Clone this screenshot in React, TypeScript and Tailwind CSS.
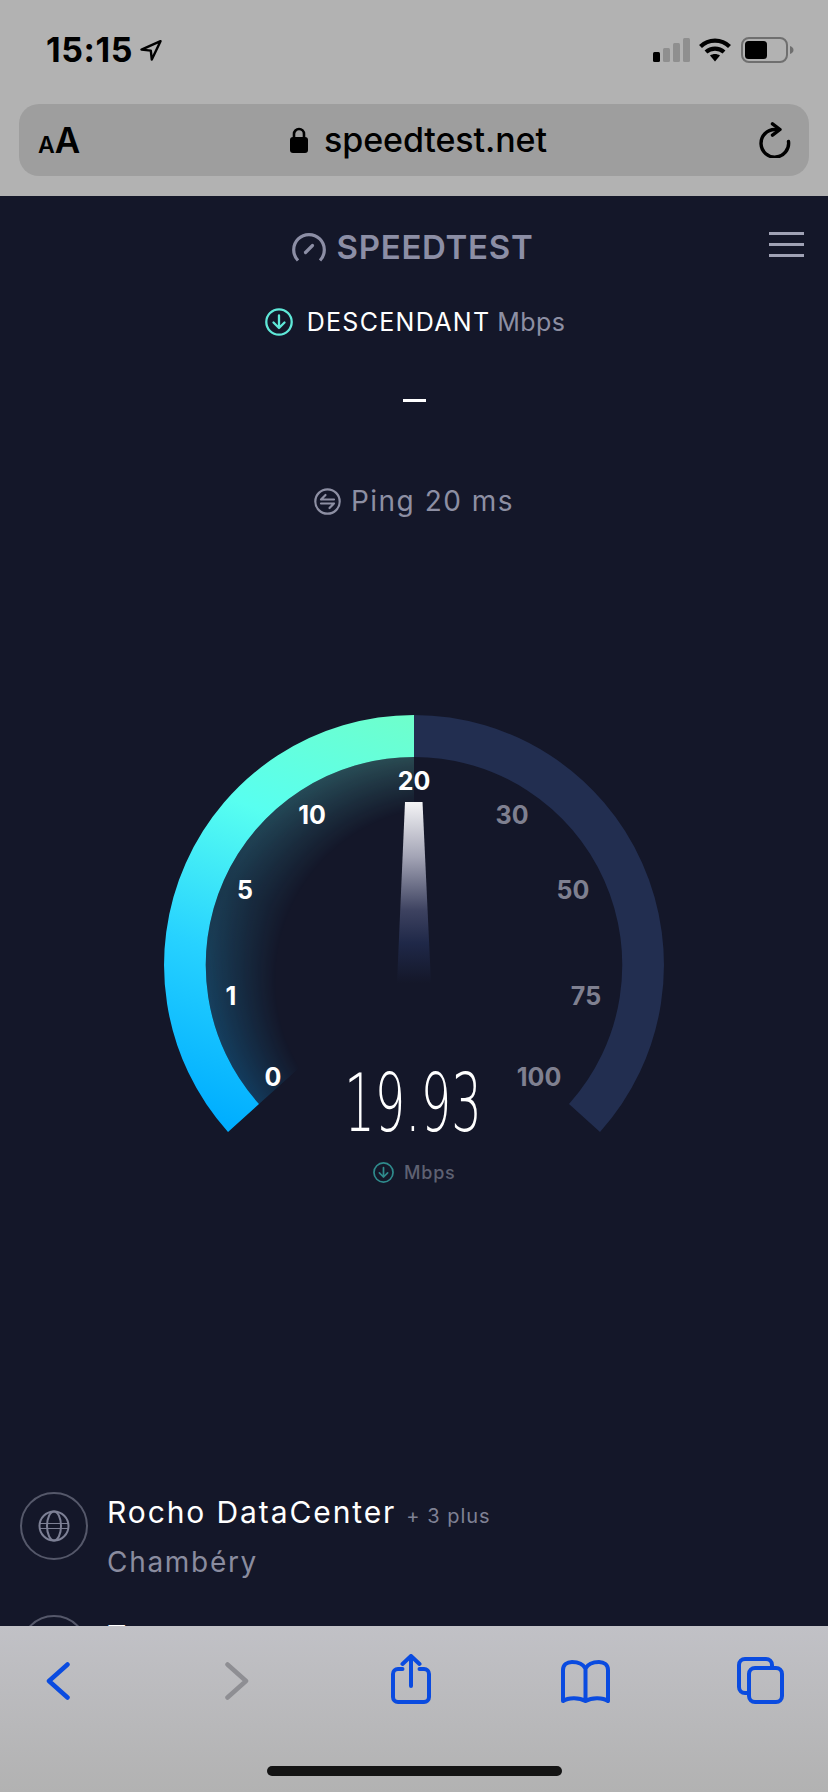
import React from "react";

const sans = "font-['Inter','Noto_Sans',sans-serif]";

function LocationArrow() {
  return (
    <svg width="22" height="21" viewBox="0 0 22 21" fill="none" stroke="#000" strokeWidth="2.4" strokeLinejoin="round">
      <path d="M20.5 1.2 1.5 9.6l9.3 1 1 9z" />
    </svg>
  );
}

function SignalBars() {
  return (
    <svg width="37" height="24" viewBox="0 0 37 24">
      <rect x="0" y="14" width="7" height="10" rx="1.5" fill="#000" />
      <rect x="10" y="10" width="7" height="14" rx="1.5" fill="#8f8f8f" />
      <rect x="20" y="5" width="7" height="19" rx="1.5" fill="#8f8f8f" />
      <rect x="30" y="0" width="7" height="24" rx="1.5" fill="#8f8f8f" />
    </svg>
  );
}

function Wifi() {
  return (
    <svg width="32" height="24" viewBox="0 0 32 24" fill="none" stroke="#000" strokeWidth="4.2">
      <path d="M1.5 8.5C9.5 .6 22.5 .6 30.5 8.5" />
      <path d="M7 14c5-4.6 13-4.6 18 0" />
      <path d="M11 17.4l5 6 5-6c-3-2-7-2-10 0z" fill="#000" stroke="none" />
    </svg>
  );
}

function Battery() {
  return (
    <svg width="53" height="26" viewBox="0 0 53 26">
      <rect x="1" y="1" width="45" height="24" rx="7" fill="none" stroke="#6f6f6f" strokeWidth="2" />
      <rect x="4" y="4" width="22" height="18" rx="3.5" fill="#000" />
      <path d="M49 9c2.500.8 3.500 2.300 3.500 4s-1 3.200-3.500 4z" fill="#6f6f6f" />
    </svg>
  );
}

function Lock() {
  return (
    <svg width="18" height="26" viewBox="0 0 18 26">
      <path d="M4 11V7a5 5 0 0 1 10 0v4" fill="none" stroke="#000" strokeWidth="2.6" />
      <rect x="0" y="10" width="18" height="16" rx="3" fill="#000" />
    </svg>
  );
}

function Reload() {
  return (
    <svg width="32" height="36" viewBox="0 0 32 36" fill="none" stroke="#000" strokeWidth="3.400" strokeLinecap="round" strokeLinejoin="round">
      <path d="M29.500 19.500A13.800 13.800 0 1 1 15.800 7.500H20" />
      <path d="M13.500 1.800 21 7.500l-7.500 5.700" />
    </svg>
  );
}

function GaugeLogo() {
  return (
    <svg width="34" height="30" viewBox="0 0 34 30" fill="none" stroke="#8c8ea5" strokeWidth="3.200" strokeLinecap="butt">
      <path d="M6 28.500A15.300 15.300 0 1 1 28 28.500" />
      <path d="M13.500 20.500 20.500 13.500" strokeLinecap="round" />
    </svg>
  );
}

function DownCircle({ size, color }: { size: number; color: string }) {
  return (
    <svg width={size} height={size} viewBox="0 0 28 28" fill="none" stroke={color} strokeWidth="2.300" strokeLinecap="round" strokeLinejoin="round">
      <circle cx="14" cy="14" r="12.700" />
      <path d="M14 7.500v12.500M8.500 14.500 14 20l5.500-5.500" />
    </svg>
  );
}

function PingIcon() {
  return (
    <svg width="27" height="27" viewBox="0 0 27 27" fill="none" stroke="#8d8fa3" strokeWidth="2.200" strokeLinecap="round" strokeLinejoin="round">
      <circle cx="13.500" cy="13.500" r="12.200" />
      <path d="M7 11.500h13M7 11.500l4.500-4.500M20 15.500H7M20 15.500l-4.500 4.500" />
    </svg>
  );
}

function Globe() {
  return (
    <svg width="32" height="32" viewBox="0 0 32 32" fill="none" stroke="#7d8095" strokeWidth="2">
      <circle cx="16" cy="16" r="14.500" />
      <ellipse cx="16" cy="16" rx="7" ry="14.500" />
      <path d="M1.500 13.500h29M1.500 18.500h29" strokeWidth="1.200" />
    </svg>
  );
}

const blue = "#0a4be0";

function ChevronLeft({ color }: { color: string }) {
  return (
    <svg width="24" height="38" viewBox="0 0 24 38" fill="none" stroke={color} strokeWidth="4.500" strokeLinecap="round" strokeLinejoin="round">
      <path d="M21.500 2.500 3 19l18.500 16.500" />
    </svg>
  );
}

function ChevronRight({ color }: { color: string }) {
  return (
    <svg width="24" height="38" viewBox="0 0 24 38" fill="none" stroke={color} strokeWidth="4.500" strokeLinecap="round" strokeLinejoin="round">
      <path d="M2.500 2.500 21 19 2.500 35.500" />
    </svg>
  );
}

function ShareIcon() {
  return (
    <svg width="40" height="50" viewBox="0 0 40 50" fill="none" stroke={blue} strokeWidth="4" strokeLinecap="round" strokeLinejoin="round">
      <path d="M11.500 15H7a5 5 0 0 0-5 5v23a5 5 0 0 0 5 5h26a5 5 0 0 0 5-5V20a5 5 0 0 0-5-5h-4.500" />
      <path d="M20 32V2M11.500 10 20 2l8.500 8" />
    </svg>
  );
}

function BookIcon() {
  return (
    <svg width="49" height="43" viewBox="0 0 49 43" fill="none" stroke={blue} strokeWidth="4" strokeLinecap="round" strokeLinejoin="round">
      <path d="M24.500 8.500C22 4 17 2 11 2 6 2 2 5 2 10v31c5-3.500 16-4 22.500 0 6.500-4 17.500-3.500 22.500 0V10c0-5-4-8-9-8-6 0-11 2-13.500 6.500zM24.500 8.500V41" />
    </svg>
  );
}

function TabsIcon() {
  return (
    <svg width="47" height="47" viewBox="0 0 47 47" fill="none" stroke={blue} strokeWidth="4" strokeLinejoin="round">
      <path d="M35 10V8a6 6 0 0 0-6-6H8a6 6 0 0 0-6 6v22a6 6 0 0 0 6 6h4" />
      <rect x="12" y="11" width="33" height="34" rx="6" />
    </svg>
  );
}

// Tick labels sit on a free canvas around the dial.
const ticks = [
  { label: "0", place: "left-[109px] top-[362px]", lit: true },
  { label: "1", place: "left-[67px] top-[281px]", lit: true },
  { label: "5", place: "left-[81px] top-[175px]", lit: true },
  { label: "10", place: "left-[148px] top-[100px]", lit: true },
  { label: "20", place: "left-[250px] top-[66px]", lit: true },
  { label: "30", place: "left-[348px] top-[100px]", lit: false },
  { label: "50", place: "left-[409px] top-[175px]", lit: false },
  { label: "75", place: "left-[422px] top-[281px]", lit: false },
  { label: "100", place: "left-[375px] top-[362px]", lit: false },
];

function Gauge() {
  return (
    <div className="relative w-[500px] h-[480px] mx-auto">
      <svg width="500" height="480" viewBox="0 0 500 480" className="block">
        <defs>
          <linearGradient id="arcFill" gradientUnits="userSpaceOnUse" x1="90" y1="420" x2="250" y2="0">
            <stop offset="0" stopColor="#00aeff" />
            <stop offset="0.35" stopColor="#27d2ff" />
            <stop offset="0.68" stopColor="#58fff0" />
            <stop offset="1" stopColor="#6fffcb" />
          </linearGradient>
          <linearGradient id="glowFill" gradientUnits="userSpaceOnUse" x1="100" y1="400" x2="250" y2="40">
            <stop offset="0" stopColor="#0aa8ff" stopOpacity="0.3" />
            <stop offset="0.5" stopColor="#3ad8ff" stopOpacity="0.17" />
            <stop offset="1" stopColor="#78ffe0" stopOpacity="0.28" />
          </linearGradient>
          <radialGradient id="glowFade" gradientUnits="userSpaceOnUse" cx="285" cy="265" r="240">
            <stop offset="0.72" stopColor="#fff" stopOpacity="0" />
            <stop offset="1" stopColor="#fff" stopOpacity="1" />
          </radialGradient>
          <mask id="glowMask" maskUnits="userSpaceOnUse" x="0" y="0" width="500" height="480">
            <rect width="500" height="480" fill="url(#glowFade)" />
          </mask>
          <linearGradient id="needleFill" gradientUnits="userSpaceOnUse" x1="0" y1="87" x2="0" y2="268">
            <stop offset="0" stopColor="#f4f4f6" />
            <stop offset="0.3" stopColor="#a4a5b6" />
            <stop offset="0.6" stopColor="#3d4260" />
            <stop offset="0.78" stopColor="#1f2848" />
            <stop offset="1" stopColor="#1f2848" stopOpacity="0" />
          </linearGradient>
        </defs>
        <path d="M250 42A208 208 0 0 0 95 389L250 250Z" fill="url(#glowFill)" mask="url(#glowMask)" />
        <path d="M64 417A250 250 0 0 1 250 0V42A208 208 0 0 0 95 389Z" fill="url(#arcFill)" />
        <path d="M250 0A250 250 0 0 1 436 417L405 389A208 208 0 0 0 250 42Z" fill="#222e50" />
        <path d="M241 87H258.500L267 268H233Z" fill="url(#needleFill)" />
      </svg>
      {ticks.map((t) => (
        <span
          key={t.label}
          className={`absolute ${t.place} -translate-x-1/2 -translate-y-1/2 text-[25px] leading-none font-bold ${
            t.lit ? "text-white" : "text-[#7f8090]"
          }`}
        >
          {t.label}
        </span>
      ))}
      <span className="absolute left-[249px] top-[389px] -translate-x-1/2 -translate-y-1/2 scale-x-[0.6] font-['DejaVu_Sans',sans-serif] text-[80px] leading-none font-extralight text-white whitespace-nowrap">
        19.93
      </span>
      <div className="absolute left-[209px] top-[447px] flex items-center gap-[10px]">
        <DownCircle size={21} color="#2f8a8c" />
        <span className="text-[18px] leading-none font-medium tracking-[0.8px] text-[#5e6172]">Mbps</span>
      </div>
    </div>
  );
}

function ServerRow({ name, extra, place, lead }: { name: string; extra?: string; place?: string; lead: string }) {
  return (
    <div className="flex gap-[19px] h-[123px]">
      <div className="w-[68px] h-[68px] shrink-0 rounded-full border-2 border-[#55586a] flex items-center justify-center">
        <Globe />
      </div>
      <div className={lead}>
        <div className="flex items-baseline gap-[10px] whitespace-nowrap">
          <span className="text-[30px] leading-[36px] text-white tracking-[1.9px]">{name}</span>
          {extra && <span className="text-[20px] tracking-[1px] text-[#7f8194]">{extra}</span>}
        </div>
        {place && <div className="text-[28px] leading-[36px] mt-[13px] text-[#8a8c9f] tracking-[1.7px]">{place}</div>}
      </div>
    </div>
  );
}

export default function App() {
  return (
    <div className={`w-[828px] h-[1792px] overflow-hidden flex flex-col bg-[#141729] ${sans}`}>
      <header className="h-[196px] shrink-0 bg-[#b2b2b2] flex flex-col">
        <div className="h-[104px] pl-[46px] pr-[34px] pt-[32px] flex justify-between items-start">
          <div className="flex items-center gap-[7px] h-[36px]">
            <span className="text-[34px] leading-none font-bold tracking-[0.6px] text-black">15:15</span>
            <LocationArrow />
          </div>
          <div className="flex items-center gap-[9px] h-[36px]">
            <SignalBars />
            <div className="w-[32px] mr-px">
              <Wifi />
            </div>
            <Battery />
          </div>
        </div>
        <div className="mx-[19px] h-[72px] rounded-[20px] bg-[#9e9e9e] grid grid-cols-[1fr_auto_1fr] items-center pl-[19px] pr-[18px]">
          <div className="flex items-baseline font-semibold text-black leading-none">
            <span className="text-[23px]">A</span>
            <span className="text-[35px]">A</span>
          </div>
          <div className="flex items-center gap-[16px] ml-[8px]">
            <Lock />
            <span className="text-[34px] leading-none font-medium tracking-[-0.1px] text-black">speedtest.net</span>
          </div>
          <div className="flex justify-end">
            <Reload />
          </div>
        </div>
      </header>

      <main className="flex-1 min-h-0 overflow-hidden">
        <div className="relative h-[102px] flex items-end justify-center gap-[11px] pb-[36px] pr-[3px]">
          <GaugeLogo />
          <span className="text-[33px] leading-[30px] font-semibold tracking-[0.7px] text-[#8c8ea5]">SPEEDTEST</span>
          <div className="absolute right-[24px] top-[36px] w-[35px] flex flex-col gap-[8px]">
            <div className="h-[3px] bg-[#a0a2b5]" />
            <div className="h-[3px] bg-[#a0a2b5]" />
            <div className="h-[3px] bg-[#a0a2b5]" />
          </div>
        </div>
        <div className="flex items-center justify-center gap-[14px] h-[48px] pl-[2px]">
          <DownCircle size={28} color="#5fe8d8" />
          <span className="text-[25px] leading-none text-white tracking-[1.300px]">DESCENDANT</span>
          <span className="text-[25px] leading-none text-[#8d8fa3] tracking-[0.4px] -ml-[7px]">Mbps</span>
        </div>
        <div className="flex justify-center pt-[53px]">
          <div className="w-[23px] h-[3px] bg-white" />
        </div>
        <div className="flex items-center justify-center gap-[10px] h-[40px] mt-[79px]">
          <PingIcon />
          <span className="text-[28px] leading-none text-[#8d8fa3] tracking-[1.500px]">Ping 20 ms</span>
        </div>
        <div className="mt-[194px]">
          <Gauge />
        </div>
        <div className="pl-[20px] pt-[297px]">
          <ServerRow name="Rocho DataCenter" extra="+ 3 plus" place="Chambéry" lead="pt-[2px]" />
          <ServerRow name="T" lead="pt-[3px]" />
        </div>
      </main>

      <footer className="h-[166px] shrink-0 bg-gradient-to-b from-[#c1c1c6] to-[#b2b2b2] flex flex-col">
        <div className="h-[77px] mt-[28px] relative flex items-start">
          <div className="absolute left-[46px] top-[8px]"><ChevronLeft color={blue} /></div>
          <div className="absolute left-[225px] top-[8px]"><ChevronRight color="#8e8e93" /></div>
          <div className="absolute left-[391px] top-0"><ShareIcon /></div>
          <div className="absolute left-[561px] top-[6px]"><BookIcon /></div>
          <div className="absolute left-[737px] top-[3px]"><TabsIcon /></div>
        </div>
        <div className="mt-[35px] mx-auto w-[295px] h-[10px] rounded-full bg-[#141414]" />
      </footer>
    </div>
  );
}
